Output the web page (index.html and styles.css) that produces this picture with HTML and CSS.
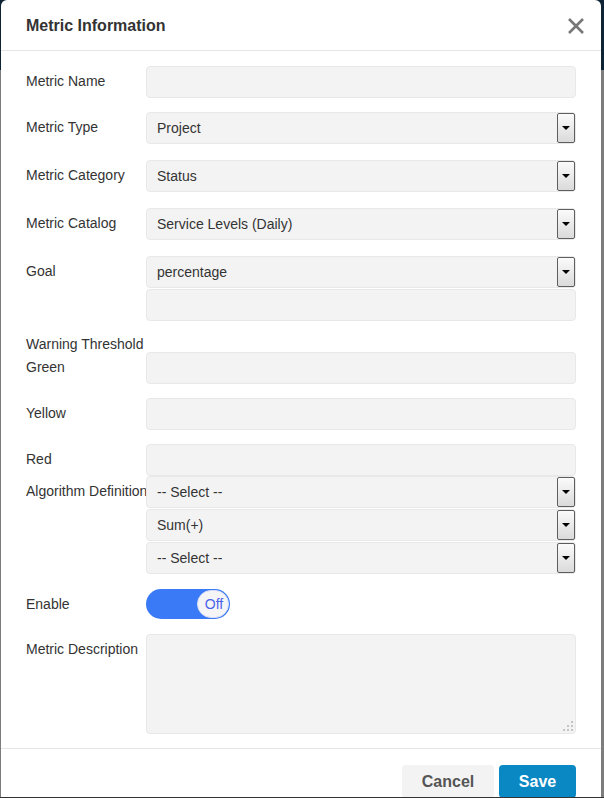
FILE: index.html
```html
<!DOCTYPE html>
<html>
<head>
<meta charset="utf-8">
<link rel="stylesheet" href="styles.css">
</head>
<body>
<div class="modal">
  <div class="modal-header">
    <h1 class="title">Metric Information</h1>
    <span class="close">
      <svg width="18" height="18" viewBox="0 0 18 18"><path d="M2 2 L16 16 M16 2 L2 16" stroke="#777" stroke-width="2.6" stroke-linecap="butt"/></svg>
    </span>
  </div>
  <div class="modal-body">
    <div class="row r-name">
      <label class="lbl">Metric Name</label>
      <div class="fields"><div class="input"></div></div>
    </div>
    <div class="row r-sel">
      <label class="lbl">Metric Type</label>
      <div class="fields"><div class="select"><span class="val">Project</span><span class="btn"><i class="tri"></i></span></div></div>
    </div>
    <div class="row r-sel">
      <label class="lbl">Metric Category</label>
      <div class="fields"><div class="select"><span class="val">Status</span><span class="btn"><i class="tri"></i></span></div></div>
    </div>
    <div class="row r-sel">
      <label class="lbl">Metric Catalog</label>
      <div class="fields"><div class="select"><span class="val">Service Levels (Daily)</span><span class="btn"><i class="tri"></i></span></div></div>
    </div>
    <div class="row r-goal">
      <label class="lbl">Goal</label>
      <div class="fields">
        <div class="select"><span class="val">percentage</span><span class="btn"><i class="tri"></i></span></div>
        <div class="input short"></div>
      </div>
    </div>
    <div class="section-lbl">Warning Threshold</div>
    <div class="row r-thr">
      <label class="lbl">Green</label>
      <div class="fields"><div class="input"></div></div>
    </div>
    <div class="row r-thr">
      <label class="lbl">Yellow</label>
      <div class="fields"><div class="input"></div></div>
    </div>
    <div class="row r-red">
      <label class="lbl">Red</label>
      <div class="fields"><div class="input red"></div></div>
    </div>
    <div class="row r-alg">
      <label class="lbl nowrap">Algorithm Definition</label>
      <div class="fields stack">
        <div class="select"><span class="val">-- Select --</span><span class="btn"><i class="tri"></i></span></div>
        <div class="select"><span class="val">Sum(+)</span><span class="btn"><i class="tri"></i></span></div>
        <div class="select"><span class="val">-- Select --</span><span class="btn"><i class="tri"></i></span></div>
      </div>
    </div>
    <div class="row r-enable">
      <label class="lbl">Enable</label>
      <div class="fields">
        <div class="toggle"><span class="knob">Off</span></div>
      </div>
    </div>
    <div class="row r-desc">
      <label class="lbl">Metric Description</label>
      <div class="fields">
        <div class="textarea">
          <svg class="grip" width="12" height="12" viewBox="0 0 12 12">
            <rect x="9" y="1" width="2" height="2" fill="#c4c4c4"/>
            <rect x="5" y="5" width="2" height="2" fill="#c4c4c4"/>
            <rect x="9" y="5" width="2" height="2" fill="#c4c4c4"/>
            <rect x="1" y="9" width="2" height="2" fill="#c4c4c4"/>
            <rect x="5" y="9" width="2" height="2" fill="#c4c4c4"/>
            <rect x="9" y="9" width="2" height="2" fill="#c4c4c4"/>
          </svg>
        </div>
      </div>
    </div>
  </div>
  <div class="modal-footer">
    <button class="b-cancel">Cancel</button>
    <button class="b-save">Save</button>
  </div>
</div>
</body>
</html>
```

FILE: styles.css
```css
* { box-sizing: border-box; }
html {
  background: linear-gradient(to bottom, #0e2435 0, #0e2435 70px, #7d7d7d 70px, #7d7d7d 100%);
  height: 100%;
}
body {
  margin: 0;
  height: 798px;
  overflow: hidden;
  font-family: "Liberation Sans", Arial, sans-serif;
  color: #333;
  border-bottom: 1px solid #333;
}
.modal {
  margin: 0 3px 0 1px;
  width: 600px;
  height: 797px;
  overflow: hidden;
  background: #fff;
  border-radius: 6px 6px 0 0;
}
.modal-header {
  display: flex;
  align-items: center;
  justify-content: space-between;
  height: 51px;
  padding: 2px 16px 0 25px;
  border-bottom: 1px solid #e5e5e5;
}
.title {
  margin: 0;
  font-size: 16px;
  font-weight: bold;
  color: #333;
  line-height: 20px;
}
.close { display: flex; }
.modal-body {
  padding: 15px 25px 14px 25px;
}
.row {
  display: flex;
  align-items: flex-start;
}
.lbl {
  width: 120px;
  flex: none;
  font-size: 14px;
  line-height: 16px;
  padding-top: 7px;
  color: #333;
}
.nowrap { white-space: nowrap; }
.fields { flex: 1; display: flex; flex-direction: column; }
.input {
  height: 32px;
  background: #f3f3f3;
  border: 1px solid #e8e8e8;
  border-radius: 4px;
}
.input.short { height: 32px; margin-top: 1px; }
.input.red { height: 32px; }
.select {
  height: 32px;
  display: flex;
  align-items: center;
  background: #f3f3f3;
  border: 1px solid #e8e8e8;
  border-radius: 4px;
  padding: 0 0 0 10px;
}
.val { flex: 1; font-size: 14px; color: #333; }
.btn {
  width: 18px;
  height: 30px;
  border: 1px solid #5e5e5e;
  border-radius: 2px;
  background: linear-gradient(to bottom, #fbfbfb, #dadada);
  display: flex;
  align-items: center;
  justify-content: center;
}
.tri {
  width: 0;
  height: 0;
  border-left: 4px solid transparent;
  border-right: 4px solid transparent;
  border-top: 4px solid #000;
}
.r-name { margin-bottom: 14px; }
.r-sel { margin-bottom: 16px; }
.r-goal { margin-bottom: 15px; }
.section-lbl { font-size: 14px; line-height: 16px; }
.r-thr { margin-bottom: 14px; }
.r-red { margin-bottom: 0; }
.stack { gap: 1px; }
.r-alg { margin-bottom: 15px; }
.r-enable { margin-bottom: 15px; }
.r-enable .lbl { padding-top: 7px; }
.toggle {
  width: 84px;
  height: 30px;
  border-radius: 15px;
  background: #3b7af7;
  display: flex;
  justify-content: flex-end;
  align-items: center;
  padding-right: 1px;
}
.knob {
  width: 32px;
  height: 28px;
  border-radius: 14px;
  background: #f5f5f7;
  border: 1px solid #d8def5;
  font-size: 14px;
  color: #4b63e8;
  display: flex;
  align-items: center;
  justify-content: center;
  padding-left: 2px;
}
.textarea {
  position: relative;
  height: 100px;
  background: #f3f3f3;
  border: 1px solid #e8e8e8;
  border-radius: 4px;
}
.grip {
  position: absolute;
  right: 1px;
  bottom: 1px;
}
.modal-footer {
  border-top: 1px solid #e5e5e5;
  display: flex;
  justify-content: flex-end;
  gap: 5px;
  padding: 16px 25px 0 0;
}
button {
  font-family: "Liberation Sans", Arial, sans-serif;
  font-size: 16px;
  font-weight: bold;
  height: 33px;
  border: none;
  border-radius: 4px;
  padding: 0;
}
.b-cancel {
  width: 92px;
  background: #f3f3f3;
  color: #555;
}
.b-save {
  width: 77px;
  background: #0a88c4;
  color: #fff;
}
```
